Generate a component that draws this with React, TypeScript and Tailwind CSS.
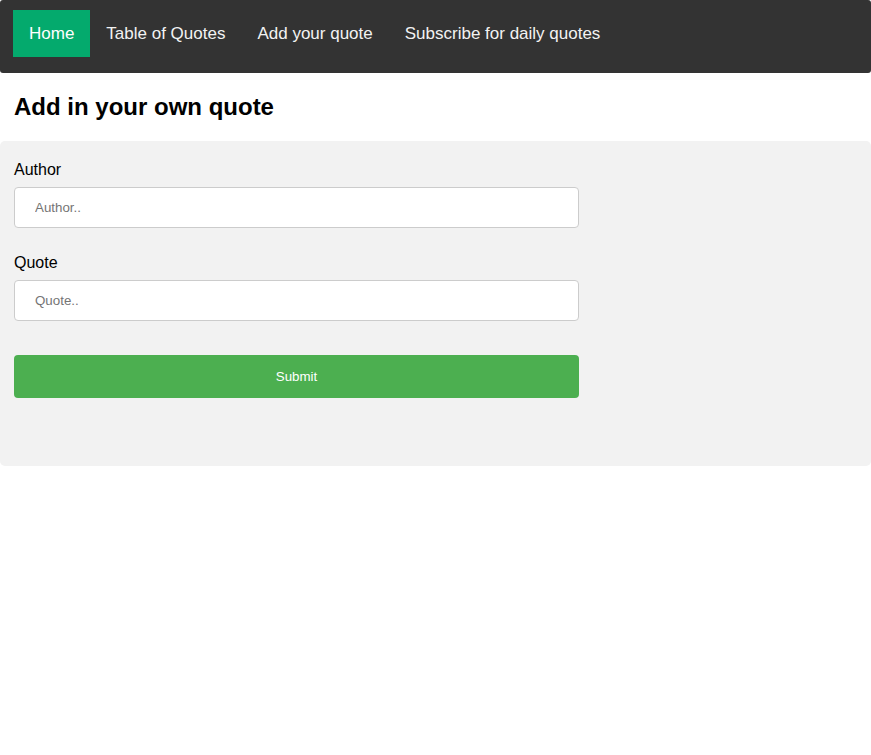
import React from "react";

export default function App() {
  const items = ["Home", "Table of Quotes", "Add your quote", "Subscribe for daily quotes"];
  return (
    <div className="min-h-[755px] bg-white font-['Liberation_Sans',Arial,sans-serif] text-black">
      <nav className="flex bg-[#333333] pl-[13px] pt-[10px] pb-[16px] rounded-[3px]">
        {items.map((t, i) => (
          <a
            key={t}
            className={`block px-[16px] py-[14px] text-[17px] leading-[19px] text-[#f2f2f2] ${
              i === 0 ? "bg-[#04AA6D] text-white" : ""
            }`}
          >
            {t}
          </a>
        ))}
      </nav>
      <h2 className="my-[20px] px-[14px] text-[24px] leading-[28px] font-bold">Add in your own quote</h2>
      <div className="rounded-[5px] bg-[#f2f2f2] px-[14px] pt-[19px] pb-[68px]">
        <div className="w-[565px]">
          <label className="block text-[16px] leading-[19px]">Author</label>
          <input
            placeholder="Author.."
            className="mt-[8px] block h-[41px] w-full rounded-[4px] border border-[#cccccc] bg-white px-[20px] text-[13.33px] placeholder:text-[#757575] outline-none"
          />
          <label className="mt-[25px] block text-[16px] leading-[19px]">Quote</label>
          <input
            placeholder="Quote.."
            className="mt-[8px] block h-[41px] w-full rounded-[4px] border border-[#cccccc] bg-white px-[20px] text-[13.33px] placeholder:text-[#757575] outline-none"
          />
          <button className="mt-[34px] block h-[43px] w-full rounded-[4px] bg-[#4CAF50] text-[13.33px] text-white">
            Submit
          </button>
        </div>
      </div>
    </div>
  );
}
